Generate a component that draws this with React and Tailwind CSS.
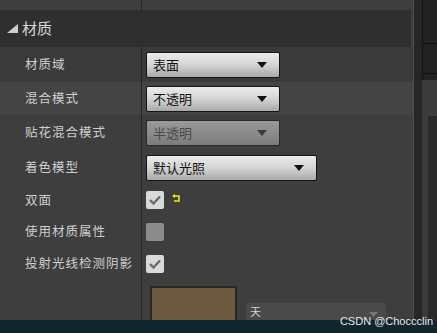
import React from "react";

const font = { fontFamily: '"Noto Sans CJK SC", "Noto Sans", sans-serif' };

function Arrow({ dim }) {
  return (
    <svg width="10" height="6" viewBox="0 0 10 6" className="ml-auto mr-2">
      <path d="M0 0 H10 L5 6 Z" fill={dim ? "#3a3a3a" : "#111"} />
    </svg>
  );
}

function Dropdown({ text, width, disabled }) {
  return (
    <div
      className={`flex items-center h-[26px] border rounded-[2px] px-1 ${
        disabled
          ? "border-[#2a2a2a] bg-gradient-to-b from-[#9a9a9a] to-[#7c7c7c] text-[#4a4a4a]"
          : "border-[#151515] bg-gradient-to-b from-[#ececec] via-[#d4d4d4] to-[#a9a9a9] text-[#111]"
      } ${width}`}
    >
      <span className="text-[13px] leading-none pl-[2px]">{text}</span>
      <Arrow dim={disabled} />
    </div>
  );
}

function Check({ checked, disabled }) {
  return (
    <div
      className={`w-[18px] h-[18px] rounded-[2px] flex items-center justify-center ${
        disabled ? "bg-[#8c8c8c]" : "bg-[#d9d9d9]"
      }`}
    >
      {checked && (
        <svg width="12" height="10" viewBox="0 0 12 10">
          <path d="M1 5 L4.5 8.5 L11 1.5" stroke="#6a6a6a" strokeWidth="2.4" fill="none" />
        </svg>
      )}
    </div>
  );
}

function Row({ label, children, h, bg }) {
  return (
    <div className={`flex ${h} ${bg || ""}`}>
      <div className="w-[141px] flex items-center pl-[25px] text-[12.5px] text-[#cfcfcf] tracking-[1px]">
        {label}
      </div>
      <div className="w-px bg-[#262626]" />
      <div className="flex-1 flex items-center pl-[4px]">{children}</div>
    </div>
  );
}

export default function App() {
  return (
    <div className="w-[437px] h-[333px] bg-[#3e3e3e] overflow-hidden flex flex-col relative" style={font}>
      <div className="flex flex-1">
        {/* details panel */}
        <div className="w-[414px] flex flex-col border-r border-[#4c4c4c]">
          <div className="h-[10px] flex">
            <div className="w-[141px]" />
            <div className="w-px bg-[#262626]" />
          </div>
          <div className="h-[37px] bg-[#2f2f2f] flex items-center pl-[7px] mr-[2px]">
            <svg width="11" height="9" viewBox="0 0 11 9">
              <path d="M11 0 V9 H0 Z" fill="#cfcfcf" />
            </svg>
            <span className="ml-[4px] text-[15px] text-[#d6d6d6]">材质</span>
          </div>
          <Row label="材质域" h="h-[35px]" bg="bg-[#3a3a3a]">
            <Dropdown text="表面" width="w-[134px]" />
          </Row>
          <Row label="混合模式" h="h-[33px]" bg="bg-[#444444]">
            <Dropdown text="不透明" width="w-[134px]" />
          </Row>
          <Row label="贴花混合模式" h="h-[35px]">
            <Dropdown text="半透明" width="w-[134px]" disabled />
          </Row>
          <Row label="着色模型" h="h-[35px]">
            <Dropdown text="默认光照" width="w-[171px]" />
          </Row>
          <Row label="双面" h="h-[30px]">
            <Check checked />
            <svg width="14" height="14" viewBox="0 0 14 14" className="ml-[6px] -mt-[2px]">
              <path d="M4 4 H9 V9 H4" stroke="#f0f000" strokeWidth="1.6" fill="none" />
              <path d="M2 4 L5 2 V6 Z" fill="#f0f000" />
            </svg>
          </Row>
          <Row label="使用材质属性" h="h-[33px]">
            <Check disabled />
          </Row>
          <Row label="投射光线检测阴影" h="h-[31px]">
            <Check checked />
          </Row>
          <div className="flex flex-1">
            <div className="w-[141px]" />
            <div className="w-px bg-[#262626]" />
            <div className="flex-1 flex items-end pl-[8px] pb-0">
              <div className="w-[87px] h-[34px] bg-[#6c5a40] border-2 border-[#2b2621] border-b-0" />
              <div className="ml-[9px] w-[140px] h-[17px] bg-[#4a4a4a] flex items-center pl-[4px] text-[11px] text-[#d0d0d0] leading-none">
                <span>天</span>
                <svg width="9" height="5" viewBox="0 0 9 5" className="ml-auto mr-[8px] mt-[6px]">
                  <path d="M0 0 H9 L4.5 5 Z" fill="#777" />
                </svg>
              </div>
            </div>
          </div>
        </div>
        {/* right side strip */}
        <div className="flex-1 flex">
          <div className="w-[8px] bg-[#262626]" />
          <div className="flex-1 flex flex-col">
            <div className="h-[80px] bg-[#222] border-l border-[#151515] flex flex-col justify-start">
              <div className="h-[44px] border-b border-[#111]" />
              <div className="h-[30px] border-b border-[#111]" />
            </div>
            <div className="flex-1 bg-[#3b3b3b] flex">
              <div className="w-[6px]" />
              <div className="flex-1 mt-[36px] bg-[#2a2a2a]" />
            </div>
          </div>
        </div>
      </div>
      <div className="h-[13px] bg-[#10272e]" />
      <div
        className="absolute right-[4px] bottom-[6px] text-[11px] text-[#e6e6e6] leading-none"
        style={{ fontFamily: '"Liberation Sans", Arial, sans-serif' }}
      >
        CSDN @Choccclin
      </div>
    </div>
  );
}
